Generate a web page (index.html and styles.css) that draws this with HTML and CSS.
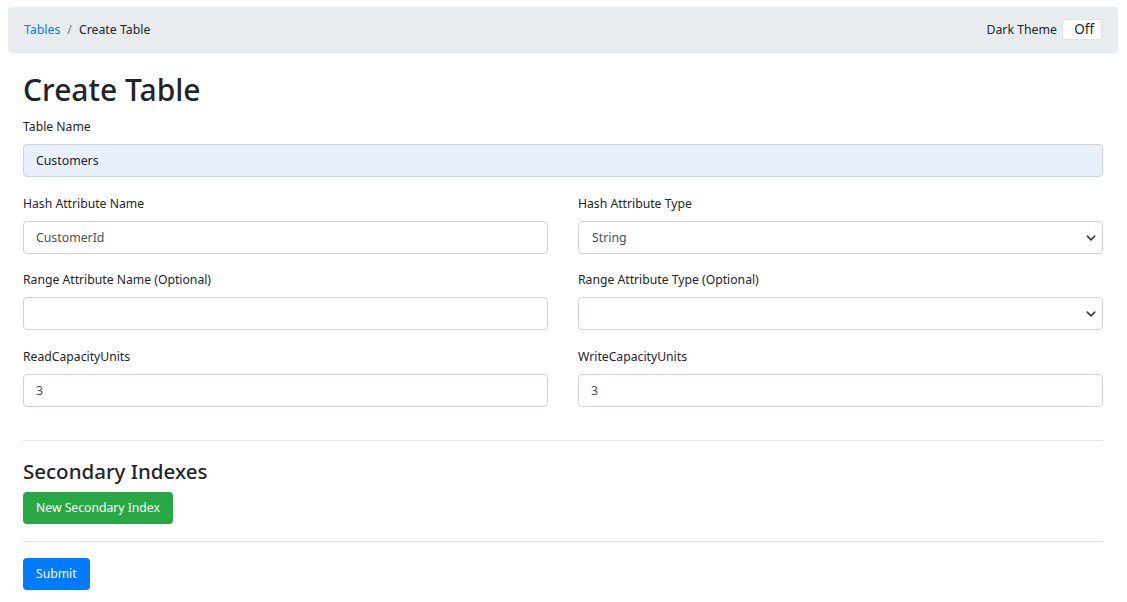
FILE: index.html
```html
<!DOCTYPE html>
<html>
<head>
<meta charset="utf-8">
<link rel="stylesheet" href="styles.css">
</head>
<body>
<nav class="topbar">
  <ol class="crumbs">
    <li><a href="#" class="crumb-link">Tables</a></li>
    <li class="sep">/</li>
    <li class="crumb-current">Create Table</li>
  </ol>
  <div class="theme">
    <span class="theme-label">Dark Theme</span>
    <span class="toggle">Off</span>
  </div>
</nav>
<main class="content">
  <h1 class="title">Create Table</h1>
  <div class="group">
    <label class="label">Table Name</label>
    <div class="input autofill">Customers</div>
  </div>
  <div class="row">
    <div class="group">
      <label class="label">Hash Attribute Name</label>
      <div class="input">CustomerId</div>
    </div>
    <div class="group">
      <label class="label">Hash Attribute Type</label>
      <div class="input select">String
        <svg class="chev" viewBox="0 0 16 16" width="10" height="10"><path d="M2 5l6 6 6-6" fill="none" stroke="#343a40" stroke-width="2.4" stroke-linecap="round" stroke-linejoin="round"/></svg>
      </div>
    </div>
  </div>
  <div class="row">
    <div class="group">
      <label class="label">Range Attribute Name (Optional)</label>
      <div class="input"></div>
    </div>
    <div class="group">
      <label class="label">Range Attribute Type (Optional)</label>
      <div class="input select">
        <svg class="chev" viewBox="0 0 16 16" width="10" height="10"><path d="M2 5l6 6 6-6" fill="none" stroke="#343a40" stroke-width="2.4" stroke-linecap="round" stroke-linejoin="round"/></svg>
      </div>
    </div>
  </div>
  <div class="row">
    <div class="group">
      <label class="label">ReadCapacityUnits</label>
      <div class="input">3</div>
    </div>
    <div class="group">
      <label class="label">WriteCapacityUnits</label>
      <div class="input">3</div>
    </div>
  </div>
  <hr class="rule first">
  <h3 class="subtitle">Secondary Indexes</h3>
  <button class="btn btn-green">New Secondary Index</button>
  <hr class="rule second">
  <button class="btn btn-blue">Submit</button>
</main>
</body>
</html>
```

FILE: styles.css
```css
* { box-sizing: border-box; }
html, body { margin: 0; padding: 0; background: #fff; }
body {
  font-family: "Noto Sans", "Open Sans", sans-serif;
  color: #212529;
  font-size: 12.3px;
}
.topbar {
  margin: 7px 9px 0 8px;
  height: 46px;
  background: #e9ecef;
  border-radius: 4px;
  display: flex;
  align-items: center;
  justify-content: space-between;
  padding: 0 16px;
}
.crumbs {
  list-style: none;
  margin: 0 0 1px;
  padding: 0;
  display: flex;
  align-items: center;
  font-size: 12.3px;
}
.crumb-link { color: #007bff; text-decoration: none; }
.sep { color: #6c757d; padding: 0 7px; }
.crumb-current { color: #212529; }
.theme { display: flex; align-items: center; gap: 5px; margin-bottom: 1px; }
.theme-label { font-size: 12.3px; color: #212529; }
.toggle {
  width: 40px;
  height: 21px;
  background: #fff;
  border: 1px solid #dee2e6;
  border-radius: 3px;
  font-size: 13.5px;
  line-height: 19px;
  text-align: right;
  padding-right: 7px;
  color: #212529;
}
.content { padding: 0 24px 0 23px; }
.title {
  margin: 18px 0 8px;
  font-size: 30px;
  font-weight: 500;
  line-height: 38px;
  color: #212529;
}
.label {
  display: block;
  font-size: 12.2px;
  line-height: 20px;
  margin-bottom: 7px;
}
.group { margin-bottom: 16.7px; position: relative; }
.row { display: grid; grid-template-columns: 1fr 1fr; column-gap: 30px; }
.input {
  height: 33px;
  border: 1px solid #ced4da;
  border-radius: 4px;
  padding: 0 12px;
  font-size: 12.3px;
  line-height: 32px;
  color: #495057;
  background: #fff;
  position: relative;
}
.autofill { background: #e8f0fe; color: #212529; }
.select { padding-left: 13px; }
.chev { position: absolute; right: 6px; top: 11px; }
.rule {
  border: 0;
  border-top: 1px solid #e3e3e3;
  margin: 0;
}
.rule.first { margin-top: 16px; margin-bottom: 16px; }
.subtitle {
  margin: 0 0 7px;
  font-size: 20.5px;
  font-weight: 500;
  line-height: 28px;
}
.btn {
  display: block;
  border: 0;
  border-radius: 4px;
  height: 32px;
  padding: 0 13px;
  font-family: "Noto Sans", "Open Sans", sans-serif;
  font-size: 12.2px;
  color: #fff;
}
.btn-green { background: #28a745; }
.btn-blue { background: #007bff; }
.rule.second { margin-top: 17px; margin-bottom: 16px; }
```
